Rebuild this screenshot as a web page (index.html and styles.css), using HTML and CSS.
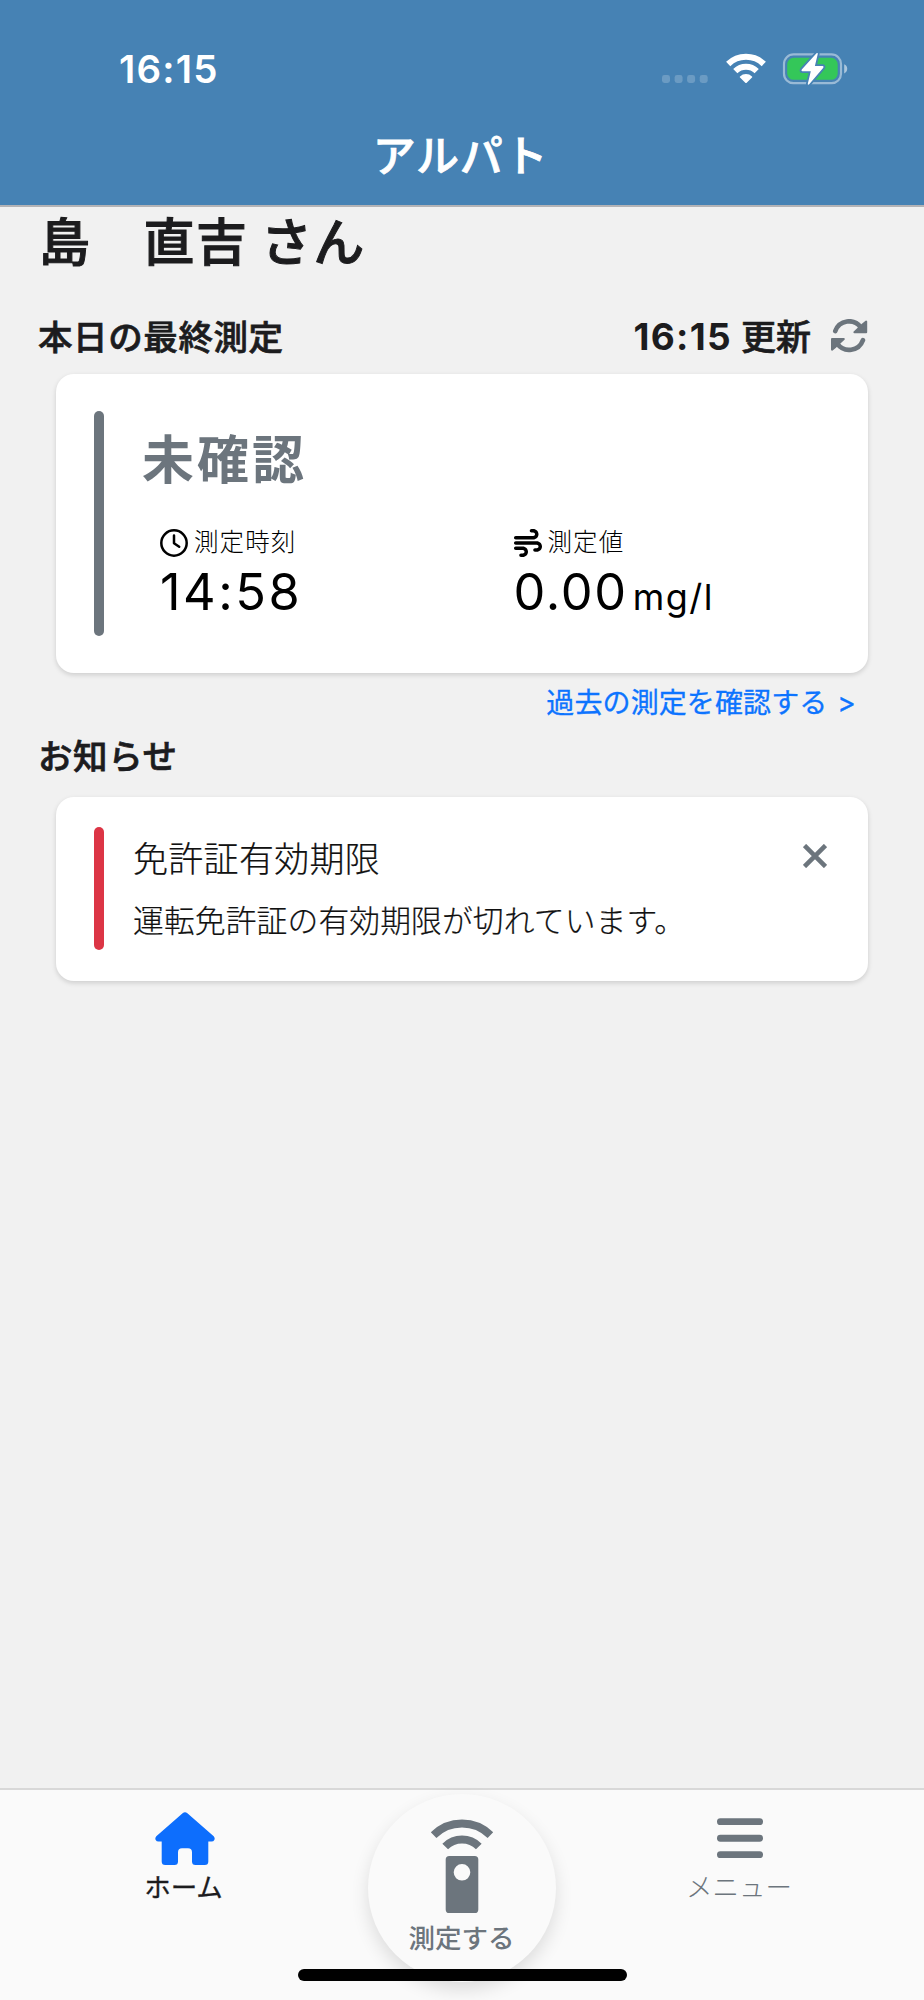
FILE: index.html
```html
<!DOCTYPE html>
<html lang="ja">
<head>
<meta charset="utf-8">
<title>アルパト</title>
<link rel="stylesheet" href="styles.css">
</head>
<body>
<div class="app">
  <header class="header">
    <div class="status">
      <span class="status-time">16:15</span>
      <div class="status-icons">
        <svg class="cell" width="46" height="8" viewBox="0 0 46 8"><g fill="#fff" fill-opacity=".2"><rect width="8" height="8" rx="2.4"/><rect x="12.6" width="8" height="8" rx="2.4"/><rect x="25.1" width="8" height="8" rx="2.4"/><rect x="37.7" width="8" height="8" rx="2.4"/></g></svg>
        <svg class="wifi" width="40" height="30" viewBox="0 0 40 30"><g fill="none" stroke="#fff" stroke-width="6"><path d="M2.2 11A25.5 25.5 0 0 1 37.8 11"/><path d="M9.3 18.1A15.4 15.4 0 0 1 30.7 18.1"/></g><path fill="#fff" d="M14 23.4a8.9 8.9 0 0 1 12 0q.5.6 0 1.200L20.700 29.700q-.7.7-1.400 0L14 24.600q-.5-.6 0-1.200z"/></svg>
        <svg class="battery" width="66" height="34" viewBox="0 0 66 34"><rect x="2" y="2.400" width="57" height="28.800" rx="9.500" fill="none" stroke="#fff" stroke-opacity=".45" stroke-width="2.200"/><rect x="5.200" y="5.800" width="50.500" height="22" rx="6.500" fill="#34c759"/><path d="M62.200 12.200q3 1.300 3 4.600t-3 4.600z" fill="#fff" fill-opacity=".55"/><path d="M34.500 1.300q1.700-1 1.200 1L32.900 14H40.600q1.500.3.700 1.700L27.200 32.300q-1.500 1.200-1.400-.6L28.800 19.300H20.400q-1.600-.4-.6-1.800z" fill="#fff" stroke="#4682b4" stroke-width="3.600" paint-order="stroke"/></svg>
      </div>
    </div>
    <h1 class="title">アルパト</h1>
  </header>

  <main class="content">
    <h2 class="name">島　直吉 さん</h2>

    <div class="section-head">
      <h3 class="section-title">本日の最終測定</h3>
      <div class="updated">
        <span class="updated-time">16:15</span><span class="updated-label">更新</span>
        <svg class="refresh" width="37" height="34" viewBox="0 0 37 34"><g fill="none" stroke="#6c757d" stroke-width="4.700" stroke-linecap="round"><path d="M4.300 12A14.600 14.600 0 0 1 29.800 8.300"/><path d="M31.900 21.200A14.600 14.600 0 0 1 6.400 24.900"/></g><g fill="#6c757d" stroke="#6c757d" stroke-width="2" stroke-linejoin="round"><path d="M35.200 2.600V13.200H23.400L31.500 5.600z"/><path d="M1 30.600V20H12.800L4.700 27.600z"/></g></svg>
      </div>
    </div>

    <section class="card result">
      <div class="bar bar-gray"></div>
      <div class="result-body">
        <p class="result-state">未確認</p>
        <div class="metrics">
          <div class="metric">
            <div class="metric-label"><svg width="28" height="28" viewBox="0 0 28 28"><g fill="none" stroke="#000" stroke-width="2.500"><circle cx="14" cy="14" r="12.700"/><path d="M14 6.500V14.200L19.200 17.700" stroke-linecap="round" stroke-linejoin="round"/></g></svg><span>測定時刻</span></div>
            <div class="metric-value metric-time">14:58</div>
          </div>
          <div class="metric">
            <div class="metric-label"><svg width="28" height="28" viewBox="0 0 512 512"><path d="M288 32c0 17.700 14.300 32 32 32h32c17.700 0 32 14.300 32 32s-14.300 32-32 32H32c-17.700 0-32 14.300-32 32s14.300 32 32 32H352c53 0 96-43 96-96s-43-96-96-96H320c-17.700 0-32 14.300-32 32zm64 352c0 17.700 14.300 32 32 32h32c53 0 96-43 96-96s-43-96-96-96H32c-17.700 0-32 14.300-32 32s14.300 32 32 32H416c17.700 0 32 14.300 32 32s-14.300 32-32 32H384c-17.700 0-32 14.300-32 32zM128 512h32c53 0 96-43 96-96s-43-96-96-96H32c-17.700 0-32 14.300-32 32s14.300 32 32 32H160c17.700 0 32 14.300 32 32s-14.300 32-32 32H128c-17.700 0-32 14.300-32 32s14.300 32 32 32z"/></svg><span>測定値</span></div>
            <div class="metric-value">0.00<span class="unit">mg/l</span></div>
          </div>
        </div>
      </div>
    </section>

    <a class="history">過去の測定を確認する<span class="gt">&gt;</span></a>

    <h3 class="section-title notice-head">お知らせ</h3>

    <section class="card notice">
      <div class="bar bar-red"></div>
      <div class="notice-body">
        <p class="notice-title">免許証有効期限</p>
        <p class="notice-text">運転免許証の有効期限が切れています。</p>
      </div>
      <svg class="close" width="24" height="24" viewBox="0 0 24 24"><path d="M1.500 1.500L22.500 22.500M22.500 1.500L1.500 22.500" stroke="#6c757d" stroke-width="4.600" fill="none"/></svg>
    </section>
  </main>

  <nav class="tabs">
    <div class="tab tab-home">
      <svg width="60" height="54" viewBox="0 0 60 54"><path fill="#0d6efd" d="M27.600 1.200Q30-.8 32.400 1.200L58.700 24.200Q60.300 26 59.300 28 58.500 29.600 56.500 29.600H53.300V49.500Q53.300 53 49.800 53H40.500Q37 53 37 49.500V40.300Q37 36.300 33 36.300H27Q23 36.300 23 40.300V49.500Q23 53 19.500 53H10.200Q6.700 53 6.700 49.500V29.600H3.500Q1.500 29.600.7 28-.3 26 1.300 24.200z"/></svg>
      <span>ホーム</span>
    </div>
    <div class="tab tab-measure">
      <div class="measure-disc">
        <svg width="64" height="96" viewBox="0 0 64 96"><g fill="none" stroke="#6c757d" stroke-width="8"><path d="M3.600 16.100A40.600 40.600 0 0 1 60.400 16.100"/><path d="M15.200 27.500A23.700 23.700 0 0 1 48.800 27.500"/></g><path fill="#6c757d" fill-rule="evenodd" d="M19.300 37H44.700Q48.300 37 48.300 40.600V90.400Q48.300 94 44.700 94H19.300Q15.700 94 15.700 90.400V40.600Q15.700 37 19.300 37zM32 45a8.300 8.300 0 1 0 0 16.600a8.300 8.300 0 1 0 0-16.600z"/></svg>
        <span>測定する</span>
      </div>
    </div>
    <div class="tab tab-menu">
      <svg width="46" height="54" viewBox="0 0 46 54"><g fill="#6c757d"><rect y="6.200" width="46" height="6.900" rx="3.400"/><rect y="22.800" width="46" height="6.900" rx="3.400"/><rect y="39.200" width="46" height="6.900" rx="3.400"/></g></svg>
      <span>メニュー</span>
    </div>
    <div class="home-indicator"></div>
  </nav>
</div>
</body>
</html>
```
FILE: styles.css
```css
* { box-sizing: border-box; margin: 0; padding: 0; }
body { background: #f2f2f2; font-family: "Noto Sans CJK JP", "Noto Sans", sans-serif; color: #1c1c1e; }
svg { display: block; flex: none; }
.app { width: 924px; height: 2000px; display: flex; flex-direction: column; background: #f1f1f1; overflow: hidden; }

.header { height: 207px; background: #4682b4; border-bottom: 2px solid #b3b3b6; color: #fff; padding-top: 48px; }
.status { height: 42px; display: flex; justify-content: space-between; padding: 0 76px 0 119px; }
.status-time { font: 600 38.500px/42px Inter, sans-serif; letter-spacing: 1.200px; }
.status-icons { display: flex; align-items: flex-start; }
.cell { margin-top: 27px; }
.wifi { margin: 5px 0 0 18px; }
.battery { margin: 4px 0 0 16px; }
.title { font-size: 43px; line-height: 60px; font-weight: 500; text-align: center; margin: 33px 3px 0 0; letter-spacing: .7px; -webkit-text-stroke: .8px currentColor; }

.content { flex: 1; display: flex; flex-direction: column; }
.name { font-size: 51px; line-height: 70px; font-weight: 500; margin-left: 39px; margin-top: -3px; letter-spacing: 1.300px; white-space: pre; -webkit-text-stroke: 1px currentColor; }
.section-head { display: flex; justify-content: space-between; align-items: center; height: 50px; margin: 36px 56px 0 38px; }
.section-title { font-size: 34.500px; line-height: 50px; font-weight: 500; letter-spacing: .6px; -webkit-text-stroke: .7px currentColor; }
.updated { display: flex; align-items: center; height: 50px; }
.updated-time { font: 700 37px/50px Inter, sans-serif; letter-spacing: 1.300px; margin-right: 9px; padding-top: 3px; }
.updated-label { font-size: 35px; line-height: 50px; font-weight: 500; -webkit-text-stroke: .7px currentColor; }
.refresh { margin: 2px 0 0 20px; }

.card { background: #fff; border-radius: 18px; margin: 0 56px; box-shadow: 0 2px 5px rgba(0,0,0,.15); display: flex; align-items: stretch; }
.bar { width: 10px; border-radius: 5px; flex: none; }
.bar-gray { background: #6c757d; }
.bar-red { background: #dc3545; }
.result { height: 299px; margin-top: 14px; padding: 37px 0 37px 38px; }
.result-body { flex: 1; margin-left: 38px; }
.result-state { font-size: 52px; line-height: 70px; font-weight: 700; color: #6c757d; letter-spacing: 3px; margin-top: 11px; }
.metrics { display: flex; margin: 36px 0 0 18px; color: #000; }
.metric { width: 353.500px; }
.metric-label { display: flex; align-items: center; gap: 6px; height: 30px; }
.metric-label span { font-size: 24.500px; line-height: 30px; font-weight: 300; letter-spacing: 1.100px; margin-top: -4px; }
.metric-value { font: 400 50.500px/60px Inter, sans-serif; margin-top: 4px; letter-spacing: 1.700px; }
.metric-time { letter-spacing: 2.500px; }
.unit { font-size: 36px; letter-spacing: 1.400px; margin-left: 5px; }
.history { align-self: flex-end; margin: 8px 68px 0 0; font-size: 28px; line-height: 40px; color: #0d74ff; letter-spacing: .1px; display: flex; -webkit-text-stroke: .3px currentColor; }
.gt { font-family: Inter, sans-serif; margin-left: 10px; padding-top: 2px; }
.notice-head { margin: 6px 0 0 38px; height: 50px; }
.notice { height: 184px; margin-top: 18px; padding: 30px 41px 31px 38px; color: #111; }
.notice-body { flex: 1; margin-left: 29px; }
.notice-title { font-size: 35px; line-height: 50px; font-weight: 300; letter-spacing: .3px; margin-top: 5px; -webkit-text-stroke: .2px currentColor; }
.notice-text { font-size: 30.800px; line-height: 44px; font-weight: 300; margin-top: 15px; letter-spacing: .1px; -webkit-text-stroke: .2px currentColor; }
.close { margin-top: 17px; }

.tabs { position: relative; height: 212px; flex: none; border-top: 2px solid #d8d8d8; background: #fafafa; display: grid; grid-template-columns: 185px 185px 185px; justify-content: center; gap: 92px; }
.tab { display: flex; flex-direction: column; align-items: center; padding-top: 22px; font-size: 26.500px; line-height: 40px; }
.tab-home span { color: #1c1c1e; margin-right: 3px; -webkit-text-stroke: .3px currentColor; }
.tab-menu svg { margin-left: 2px; }
.tab-menu span { color: #6c757d; font-weight: 300; }
.tab-measure { padding-top: 4px; }
.measure-disc { width: 188px; height: 188px; border-radius: 50%; background: #fafafa; box-shadow: 0 8px 18px rgba(0,0,0,.12); display: flex; flex-direction: column; align-items: center; padding: 25px 1px 0 0; }
.measure-disc span { color: #6c757d; font-weight: 500; margin-top: 2px; }
.home-indicator { position: absolute; left: 298px; bottom: 19px; width: 329px; height: 12px; border-radius: 6px; background: #000; }
```
